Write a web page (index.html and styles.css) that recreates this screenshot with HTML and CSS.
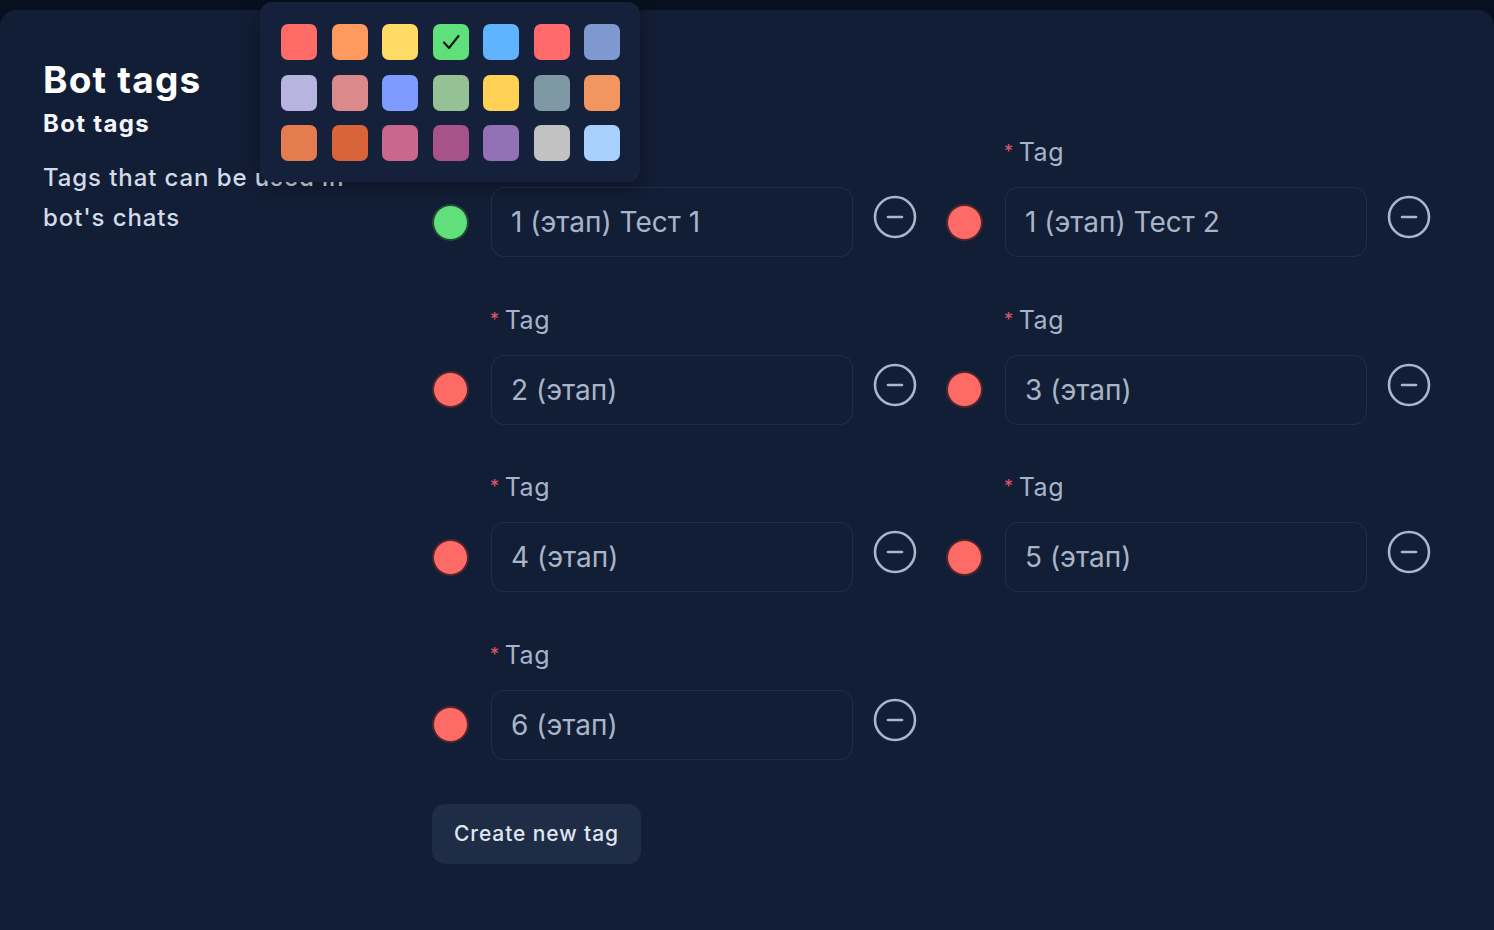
FILE: index.html
```html
<!DOCTYPE html>
<html lang="en">
<head>
<meta charset="utf-8">
<title>Bot tags</title>
<link rel="stylesheet" href="styles.css">
</head>
<body>
<div class="topbar"></div>
<main class="card">
  <section class="intro">
    <h1 class="title">Bot tags</h1>
    <h2 class="subtitle">Bot tags</h2>
    <p class="desc">Tags that can be used in bot's chats</p>
  </section>
  <section class="form">
    <div class="grid">
      <div class="row">
        <div class="label"><span class="req">*</span>Tag</div>
        <div class="line"><span class="dot green"></span><div class="input">1 (этап) Тест 1</div><svg class="minus" viewBox="0 0 44 44"><circle cx="22" cy="22" r="20" /><line x1="15" y1="22" x2="29" y2="22" /></svg></div>
      </div>
      <div class="row">
        <div class="label"><span class="req">*</span>Tag</div>
        <div class="line"><span class="dot red"></span><div class="input">1 (этап) Тест 2</div><svg class="minus" viewBox="0 0 44 44"><circle cx="22" cy="22" r="20" /><line x1="15" y1="22" x2="29" y2="22" /></svg></div>
      </div>
      <div class="row">
        <div class="label"><span class="req">*</span>Tag</div>
        <div class="line"><span class="dot red"></span><div class="input">2 (этап)</div><svg class="minus" viewBox="0 0 44 44"><circle cx="22" cy="22" r="20" /><line x1="15" y1="22" x2="29" y2="22" /></svg></div>
      </div>
      <div class="row">
        <div class="label"><span class="req">*</span>Tag</div>
        <div class="line"><span class="dot red"></span><div class="input">3 (этап)</div><svg class="minus" viewBox="0 0 44 44"><circle cx="22" cy="22" r="20" /><line x1="15" y1="22" x2="29" y2="22" /></svg></div>
      </div>
      <div class="row">
        <div class="label"><span class="req">*</span>Tag</div>
        <div class="line"><span class="dot red"></span><div class="input">4 (этап)</div><svg class="minus" viewBox="0 0 44 44"><circle cx="22" cy="22" r="20" /><line x1="15" y1="22" x2="29" y2="22" /></svg></div>
      </div>
      <div class="row">
        <div class="label"><span class="req">*</span>Tag</div>
        <div class="line"><span class="dot red"></span><div class="input">5 (этап)</div><svg class="minus" viewBox="0 0 44 44"><circle cx="22" cy="22" r="20" /><line x1="15" y1="22" x2="29" y2="22" /></svg></div>
      </div>
      <div class="row">
        <div class="label"><span class="req">*</span>Tag</div>
        <div class="line"><span class="dot red"></span><div class="input">6 (этап)</div><svg class="minus" viewBox="0 0 44 44"><circle cx="22" cy="22" r="20" /><line x1="15" y1="22" x2="29" y2="22" /></svg></div>
      </div>
    </div>
    <button class="create">Create new tag</button>
  </section>
</main>
<div class="popover">
  <span class="sw" style="background:#ff6b66"></span>
  <span class="sw" style="background:#ff9a5e"></span>
  <span class="sw" style="background:#ffdb66"></span>
  <span class="sw checked" style="background:#5fe07a"><svg viewBox="0 0 36 36"><path d="M11 18.5 L16 24 L25.5 12" /></svg></span>
  <span class="sw" style="background:#5fb3ff"></span>
  <span class="sw" style="background:#ff6b6b"></span>
  <span class="sw" style="background:#7f98cf"></span>
  <span class="sw" style="background:#b8b4e0"></span>
  <span class="sw" style="background:#db8a8c"></span>
  <span class="sw" style="background:#7e9bff"></span>
  <span class="sw" style="background:#95c195"></span>
  <span class="sw" style="background:#ffd154"></span>
  <span class="sw" style="background:#7e99a3"></span>
  <span class="sw" style="background:#f2955f"></span>
  <span class="sw" style="background:#e57c50"></span>
  <span class="sw" style="background:#d9643a"></span>
  <span class="sw" style="background:#c8688a"></span>
  <span class="sw" style="background:#a8528a"></span>
  <span class="sw" style="background:#9470b5"></span>
  <span class="sw" style="background:#c2c2c2"></span>
  <span class="sw" style="background:#a8d0ff"></span>
</div>
</body>
</html>
```

FILE: styles.css
```css
* { box-sizing: border-box; }
html, body { margin: 0; padding: 0; }
body {
  background: #07101f;
  font-family: Inter, "Noto Sans", "Liberation Sans", sans-serif;
  height: 930px;
  overflow: hidden;
  position: relative;
}
.topbar { height: 10px; background: #07101f; }
.card {
  background: #121e35;
  border-radius: 16px 16px 0 0;
  height: 920px;
  display: flex;
  padding-top: 52px;
}
.intro {
  width: 432px;
  padding-left: 43px;
  padding-right: 60px;
}
.title {
  margin: 0;
  font-size: 37px;
  line-height: 36px;
  font-weight: 700;
  letter-spacing: 1.2px;
  color: #ffffff;
}
.subtitle {
  margin: 11px 0 0;
  font-size: 24px;
  line-height: 30px;
  font-weight: 700;
  letter-spacing: 1.3px;
  color: #f2f5fa;
}
.desc {
  margin: 19px 0 0;
  font-size: 24px;
  line-height: 40px;
  font-weight: 500;
  letter-spacing: 0.9px;
  color: #d3dbe8;
}
.form { padding-top: 76px; }
.grid {
  display: grid;
  grid-template-columns: 484px 484px;
  column-gap: 30px;
  row-gap: 48.5px;
}
.label {
  padding-left: 58px;
  font-size: 25px;
  line-height: 28px;
  letter-spacing: 0.6px;
  color: #a7b3c8;
  margin-bottom: 21px;
}
.req {
  color: #e0566a;
  font-size: 18px;
  margin-right: 5px;
  vertical-align: 3px;
}
.line {
  display: flex;
  align-items: center;
  gap: 22px;
}
.dot {
  width: 37px;
  height: 37px;
  border-radius: 50%;
  border: 2px solid rgba(10, 10, 20, 0.7);
  flex: none;
}
.dot.green { background: #5fe07a; }
.dot.red { background: #fe6b66; }
.input {
  width: 362px;
  height: 70px;
  border: 1px solid #222e45;
  border-radius: 13px;
  padding-left: 19px;
  display: flex;
  align-items: center;
  font-size: 28px;
  color: #a9b4c8;
  flex: none;
}
.minus {
  width: 44px;
  height: 44px;
  margin-top: -10px;
  margin-left: -2px;
  flex: none;
}
.minus circle, .minus line {
  fill: none;
  stroke: #a9b6cc;
  stroke-width: 2.6;
  stroke-linecap: round;
}
.create {
  margin-top: 44px;
  height: 60px;
  padding: 0 22px;
  border: none;
  border-radius: 13px;
  background: #1f2c45;
  color: #dfe6f2;
  font-family: inherit;
  font-size: 21px;
  font-weight: 500;
  letter-spacing: 0.9px;
}
.popover {
  position: absolute;
  left: 260px;
  top: 2px;
  width: 380px;
  height: 180px;
  background: #15213a;
  border-radius: 12px;
  box-shadow: 0 4px 18px rgba(0, 0, 0, 0.35);
  padding: 22px 20px 0 21px;
  display: grid;
  grid-template-columns: repeat(7, 36px);
  grid-auto-rows: 36px;
  column-gap: 14.5px;
  row-gap: 14.5px;
}
.sw {
  display: block;
  width: 36px;
  height: 36px;
  border-radius: 7px;
}
.sw svg { width: 36px; height: 36px; display: block; }
.sw path {
  fill: none;
  stroke: #0d1a10;
  stroke-width: 2.2;
  stroke-linecap: round;
  stroke-linejoin: round;
}
```
